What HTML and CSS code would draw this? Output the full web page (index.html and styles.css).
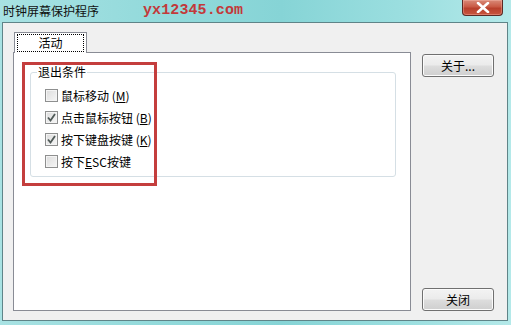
FILE: index.html
```html
<!DOCTYPE html>
<html lang="zh">
<head>
<meta charset="utf-8">
<link rel="stylesheet" href="styles.css">
</head>
<body>
<div class="window">
  <div class="titlebar">
    <span class="title">时钟屏幕保护程序</span>
    <span class="watermark">yx12345.com</span>
    <div class="close">
      <svg width="14" height="11" viewBox="0 0 14 11"><path d="M2 1 L12 10 M12 1 L2 10" stroke="#fff" stroke-width="2.6" stroke-linecap="round"/></svg>
    </div>
  </div>
  <div class="client">
    <div class="tabs">
      <div class="tabstrip">
        <div class="tab"><span class="focus">活动</span></div>
      </div>
      <div class="panel">
        <fieldset class="group">
          <legend>退出条件</legend>
          <label class="row"><span class="box"></span><span>鼠标移动 (<u>M</u>)</span></label>
          <label class="row"><span class="box"><svg width="11" height="11" viewBox="0 0 11 11"><path d="M2 5.5 L4.5 8.5 L9 2" fill="none" stroke="#505a58" stroke-width="1.8"/></svg></span><span>点击鼠标按钮 (<u>B</u>)</span></label>
          <label class="row"><span class="box"><svg width="11" height="11" viewBox="0 0 11 11"><path d="M2 5.5 L4.5 8.5 L9 2" fill="none" stroke="#505a58" stroke-width="1.8"/></svg></span><span>按下键盘按键 (<u>K</u>)</span></label>
          <label class="row"><span class="box"></span><span>按下<u>E</u>SC按键</span></label>
        </fieldset>
        <div class="highlight"></div>
      </div>
    </div>
    <div class="buttons">
      <button class="btn">关于...</button>
      <button class="btn">关闭</button>
    </div>
  </div>
</div>
</body>
</html>
```

FILE: styles.css
```css
* { box-sizing: border-box; }
html, body { margin: 0; padding: 0; }
body {
  width: 511px;
  height: 325px;
  overflow: hidden;
  font-family: "Noto Sans CJK SC", "Liberation Sans", sans-serif;
  font-size: 12px;
  color: #000;
}
.window {
  width: 511px;
  height: 325px;
  display: flex;
  flex-direction: column;
  padding: 0 3px 4px 2px;
  background: linear-gradient(to right, #a8e2e3 0%, #93dadb 30%, #86d4d6 55%, #9cdfe0 80%, #b4e9e9 100%);
}
.titlebar {
  height: 22px;
  display: flex;
  align-items: flex-start;
  padding-left: 1px;
}
.title {
  line-height: 22px;
  font-size: 12px;
  color: #111;
}
.watermark {
  margin-left: 44px;
  line-height: 22px;
  font-family: "Liberation Mono", monospace;
  font-weight: bold;
  font-size: 15px;
  color: #c2393a;
  letter-spacing: 0.1px;
}
.close {
  margin-left: auto;
  margin-right: 5px;
  width: 41px;
  height: 16px;
  border: 1px solid #5b2a24;
  border-top: none;
  border-radius: 0 0 4px 4px;
  background: linear-gradient(#d98a78 0%, #c95a45 45%, #b8402c 55%, #c8553e 100%);
  display: flex;
  align-items: center;
  justify-content: center;
  box-shadow: inset 0 0 0 1px rgba(255,200,190,0.35);
}
.client {
  flex: 1;
  display: flex;
  border: 1px solid #5f8488;
  background: #f0f0f0;
  padding: 9px 13px 9px 10px;
}
.tabs {
  width: 398px;
  display: flex;
  flex-direction: column;
}
.tabstrip {
  display: flex;
  padding-left: 1px;
  position: relative;
  z-index: 1;
}
.tab {
  width: 73px;
  height: 21px;
  border: 1px solid #898c95;
  border-bottom: none;
  background: #fff;
  margin-bottom: -1px;
  padding: 1px 2px 0;
}
.focus {
  display: block;
  height: 18px;
  outline: 1px dotted #000;
  outline-offset: -1px;
  text-align: center;
  line-height: 18px;
}
.panel {
  flex: 1;
  position: relative;
  border: 1px solid #898c95;
  background: #fff;
  padding-top: 12px;
}
.group {
  margin: 0 14px 0 16px;
  border: 1px solid #d5dfe5;
  border-radius: 3px;
  padding: 5px 0 4px 14px;
}
.group legend {
  margin-left: -8px;
  padding: 0 1px;
  line-height: 14px;
}
.row {
  display: flex;
  align-items: center;
  height: 22px;
  gap: 3px;
}
.box {
  width: 13px;
  height: 13px;
  border: 1px solid #8e8f8f;
  background: linear-gradient(135deg, #dcdcdc, #f6f6f6);
  box-shadow: inset 0 0 0 1px #f4f4f4;
  display: flex;
  align-items: center;
  justify-content: center;
}
.row u { text-underline-offset: 1px; }
.highlight {
  position: absolute;
  left: 8px;
  top: 9px;
  width: 135px;
  height: 124px;
  border: 3px solid #c43e3d;
  pointer-events: none;
}
.buttons {
  flex: 1;
  display: flex;
  flex-direction: column;
  justify-content: space-between;
  align-items: flex-end;
  padding-top: 22px;
}
.btn {
  width: 72px;
  height: 23px;
  border: 1px solid #707070;
  border-radius: 3px;
  background: linear-gradient(#f3f3f3 0%, #ebebeb 48%, #dddddd 52%, #cfcfcf 100%);
  box-shadow: inset 0 0 0 1px #fbfbfb;
  font-family: "Noto Sans CJK SC", "Liberation Sans", sans-serif;
  font-size: 12px;
  color: #000;
  padding: 0;
  line-height: 20px;
}
```
